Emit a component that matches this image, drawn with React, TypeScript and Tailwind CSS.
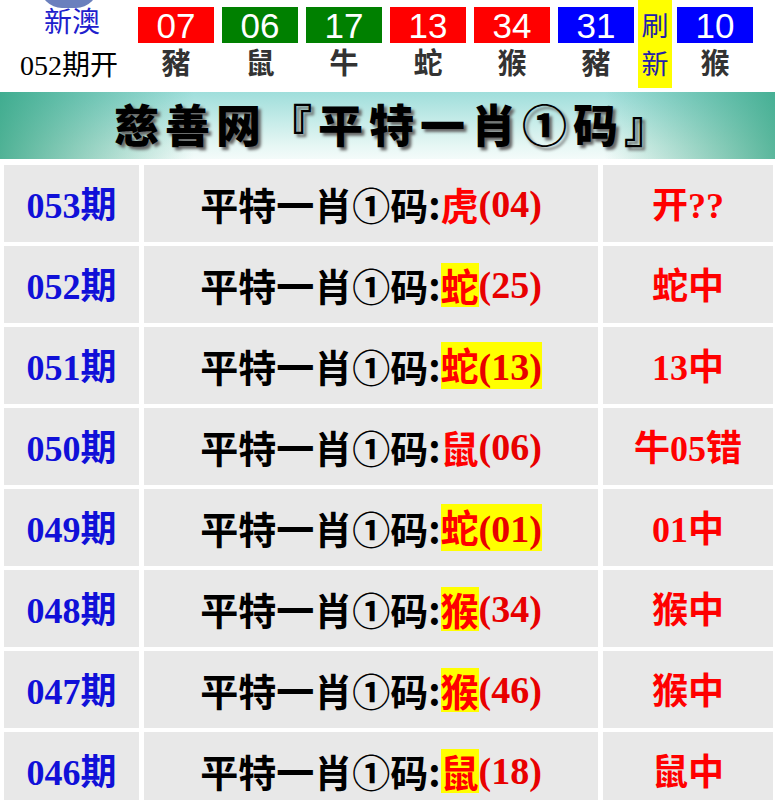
import React from 'react'

type Ball = { num: string; zodiac: string; color: string }

const balls: Ball[] = [
  { num: '07', zodiac: '豬', color: 'bg-[#ff0000]' },
  { num: '06', zodiac: '鼠', color: 'bg-[#008000]' },
  { num: '17', zodiac: '牛', color: 'bg-[#008000]' },
  { num: '13', zodiac: '蛇', color: 'bg-[#ff0000]' },
  { num: '34', zodiac: '猴', color: 'bg-[#ff0000]' },
  { num: '31', zodiac: '豬', color: 'bg-[#0000ff]' },
]

type Row = { issue: string; zodiac: string; num: string; hl: 'none' | 'char' | 'all'; result: string }

const rows: Row[] = [
  { issue: '053', zodiac: '虎', num: '(04)', hl: 'none', result: '开??' },
  { issue: '052', zodiac: '蛇', num: '(25)', hl: 'char', result: '蛇中' },
  { issue: '051', zodiac: '蛇', num: '(13)', hl: 'all', result: '13中' },
  { issue: '050', zodiac: '鼠', num: '(06)', hl: 'none', result: '牛05错' },
  { issue: '049', zodiac: '蛇', num: '(01)', hl: 'all', result: '01中' },
  { issue: '048', zodiac: '猴', num: '(34)', hl: 'char', result: '猴中' },
  { issue: '047', zodiac: '猴', num: '(46)', hl: 'char', result: '猴中' },
  { issue: '046', zodiac: '鼠', num: '(18)', hl: 'char', result: '鼠中' },
]

const serif = "font-['Liberation_Serif','Noto_Sans_CJK_SC',serif]"
const sans = "font-['Noto_Sans_CJK_SC','Liberation_Sans',sans-serif]"

function BallBox({ ball }: { ball: Ball }) {
  return (
    <div className="flex w-[76px] flex-col items-center">
      <div className={`mt-[7px] flex h-[36px] w-[76px] items-center justify-center ${ball.color}`}>
        <span className="font-['Liberation_Sans',sans-serif] text-[35px] leading-none text-white">{ball.num}</span>
      </div>
      <div className={`${sans} mt-[1px] text-[29px] font-bold leading-[34px] text-[#333]`}>{ball.zodiac}</div>
    </div>
  )
}

function PickCell({ row }: { row: Row }) {
  const zod = (
    <span className={`${sans} font-bold text-[#ff0000] ${row.hl === 'char' ? 'bg-[#ffff00]' : ''}`}>{row.zodiac}</span>
  )
  const num = <span className={`${serif} font-bold text-[#e80000]`}>{row.num}</span>
  return (
    <div className="flex items-center justify-center bg-[#e8e8e8] text-[38px] leading-[44px]">
      <span className={`${sans} font-bold text-black`}>平特一肖①码:</span>
      {row.hl === 'all' ? (
        <span className="bg-[#ffff00]">
          {zod}
          {num}
        </span>
      ) : (
        <>
          {zod}
          {num}
        </>
      )}
    </div>
  )
}

export default function App() {
  return (
    <div className="h-[800px] w-[779px] overflow-hidden bg-white">
      {/* top draw results */}
      <div className="flex h-[88px]">
        <div className="relative flex w-[138px] flex-col items-center">
          <div className="absolute left-[40px] top-[-36px] h-[44px] w-[58px] rounded-full bg-[#6b80bd]" />
          <div className={`${sans} relative mt-[4px] pl-[6px] text-[28px] leading-[32px] text-[#2020cc]`}>新澳</div>
          <div className={`${serif} mt-[10px] text-[28px] leading-[34px] text-black`}>
            052<span className={sans}>期开</span>
          </div>
        </div>
        <div className="flex gap-[8px]">
          {balls.map((b, i) => (
            <BallBox key={i} ball={b} />
          ))}
        </div>
        <div className={`${sans} ml-[4px] flex h-[88px] w-[34px] flex-col items-center justify-center bg-[#ffff00] text-[27px] leading-[38px] text-[#2222aa]`}>
          <span>刷</span>
          <span>新</span>
        </div>
        <div className="ml-[5px]">
          <BallBox ball={{ num: '10', zodiac: '猴', color: 'bg-[#0000ff]' }} />
        </div>
      </div>

      {/* banner */}
      <div className="mr-[4px] mt-[4px] flex h-[67px] items-center justify-center bg-[linear-gradient(to_right,rgba(40,160,125,0.8),rgba(40,160,125,0)_25%,rgba(40,160,125,0)_78%,rgba(40,160,125,0.75)),linear-gradient(to_bottom,#9fdedb,#e6f7f4_80%,#f4fbfa)]">
        <h1 className={`${sans} ml-[14px] mt-[-4px] text-[45px] font-black leading-none tracking-[6px] text-black [text-shadow:3px_3px_3px_#666]`}>
          慈善网『平特一肖①码』
        </h1>
      </div>

      {/* table */}
      <div className="mt-[6px] grid grid-cols-[135px_454px_170px] auto-rows-[77px] gap-x-[5px] gap-y-[4px] pl-[4px]">
        {rows.map((r) => (
          <React.Fragment key={r.issue}>
            <div className="flex items-center justify-center bg-[#e8e8e8]">
              <span className={`${serif} text-[36px] font-bold text-[#1010d8]`}>
                {r.issue}
                <span className={sans}>期</span>
              </span>
            </div>
            <PickCell row={r} />
            <div className="flex items-center justify-center bg-[#e8e8e8]">
              <span className={`${serif} text-[36px] font-bold text-[#ff0000]`}>
                {Array.from(r.result).map((ch, i) =>
                  /[0-9?]/.test(ch) ? (
                    <span key={i}>{ch}</span>
                  ) : (
                    <span key={i} className={sans}>
                      {ch}
                    </span>
                  )
                )}
              </span>
            </div>
          </React.Fragment>
        ))}
      </div>
    </div>
  )
}
